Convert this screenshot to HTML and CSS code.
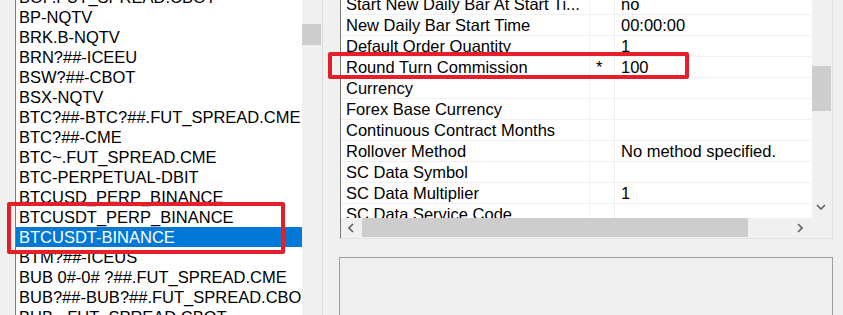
FILE: index.html
```html
<!DOCTYPE html>
<html lang="en">
  <head>
    <meta charset="UTF-8" />
    <meta name="viewport" content="width=device-width, initial-scale=1.0" />
    <title>Symbol Settings</title>
    <link rel="stylesheet" href="styles.css">
  </head>
  <body>
    <div class="app">
      <div class="symbol-box">
        <div class="symbol-list">
          <div class="symbol">BOP.FUT_SPREAD.CBOT</div>
          <div class="symbol">BP-NQTV</div>
          <div class="symbol">BRK.B-NQTV</div>
          <div class="symbol">BRN?##-ICEEU</div>
          <div class="symbol">BSW?##-CBOT</div>
          <div class="symbol">BSX-NQTV</div>
          <div class="symbol">BTC?##-BTC?##.FUT_SPREAD.CME</div>
          <div class="symbol">BTC?##-CME</div>
          <div class="symbol">BTC~.FUT_SPREAD.CME</div>
          <div class="symbol">BTC-PERPETUAL-DBIT</div>
          <div class="symbol">BTCUSD_PERP_BINANCE</div>
          <div class="symbol">BTCUSDT_PERP_BINANCE</div>
          <div class="symbol selected">BTCUSDT-BINANCE</div>
          <div class="symbol">BTM?##-ICEUS</div>
          <div class="symbol">BUB 0#-0# ?##.FUT_SPREAD.CME</div>
          <div class="symbol">BUB?##-BUB?##.FUT_SPREAD.CBOT</div>
          <div class="symbol">BUB~.FUT_SPREAD.CBOT</div>
        </div>
        <div class="vscroll">
          <div class="vthumb list-thumb"></div>
        </div>
      </div>

      <div class="right-col">
        <div class="grid-box">
          <div class="grid-main">
            <div class="grid-view">
              <div class="grid-rows">
                <div class="prop"><span class="name">Start New Daily Bar At Start Ti...</span><span class="flag"></span><span class="value">no</span></div>
                <div class="prop"><span class="name">New Daily Bar Start Time</span><span class="flag"></span><span class="value">00:00:00</span></div>
                <div class="prop"><span class="name">Default Order Quantity</span><span class="flag"></span><span class="value">1</span></div>
                <div class="prop"><span class="name">Round Turn Commission</span><span class="flag">*</span><span class="value">100</span></div>
                <div class="prop"><span class="name">Currency</span><span class="flag"></span><span class="value"></span></div>
                <div class="prop"><span class="name">Forex Base Currency</span><span class="flag"></span><span class="value"></span></div>
                <div class="prop"><span class="name">Continuous Contract Months</span><span class="flag"></span><span class="value"></span></div>
                <div class="prop"><span class="name">Rollover Method</span><span class="flag"></span><span class="value">No method specified.</span></div>
                <div class="prop"><span class="name">SC Data Symbol</span><span class="flag"></span><span class="value"></span></div>
                <div class="prop"><span class="name">SC Data Multiplier</span><span class="flag"></span><span class="value">1</span></div>
                <div class="prop"><span class="name">SC Data Service Code</span><span class="flag"></span><span class="value"></span></div>
              </div>
            </div>
            <div class="vscroll grid-vscroll">
              <div class="vthumb grid-thumb"></div>
              <svg class="arrow-down" width="10" height="6" viewBox="0 0 10 6"><path d="M1 1 L5 5 L9 1" fill="none" stroke="#606060" stroke-width="1.6"/></svg>
            </div>
          </div>
          <div class="hscroll">
            <svg class="arrow-side" width="6" height="10" viewBox="0 0 6 10"><path d="M5 1 L1 5 L5 9" fill="none" stroke="#606060" stroke-width="1.6"/></svg>
            <div class="hthumb"></div>
            <svg class="arrow-side arrow-right" width="6" height="10" viewBox="0 0 6 10"><path d="M1 1 L5 5 L1 9" fill="none" stroke="#606060" stroke-width="1.6"/></svg>
            <div class="corner"></div>
          </div>
        </div>
        <div class="desc-box"></div>
      </div>

      <div class="mark mark-symbol"></div>
      <div class="mark mark-commission"></div>
    </div>
  </body>
</html>
```

FILE: styles.css
```css
body {
  margin: 0;
  background-color: #f0f0f0;
  font-family: "Liberation Sans", Arial, sans-serif;
  font-size: 16.5px;
  color: #000;
  overflow: hidden;
}
.app {
  position: relative;
  display: flex;
  height: 315px;
  overflow: hidden;
}

/* symbol list on the left */
.symbol-box {
  display: flex;
  margin-left: 15px;
  width: 306px;
  height: 315px;
  border-left: 1px solid #7a7a7a;
  border-right: 1px solid #dadada;
  background-color: #fff;
  overflow: hidden;
}
.symbol-list {
  flex: 1;
  margin-top: -13px;
  overflow: hidden;
}
.symbol {
  height: 20px;
  line-height: 20px;
  padding-left: 3px;
  white-space: nowrap;
  overflow: hidden;
}
.symbol.selected {
  background-color: #0078d7;
  color: #fff;
}
.vscroll {
  position: relative;
  width: 20px;
  background-color: #f0f0f0;
  flex-shrink: 0;
}
.vthumb {
  position: absolute;
  left: 0;
  width: 19px;
  background-color: #cdcdcd;
}
.list-thumb {
  top: 24px;
  height: 21px;
}

/* right column */
.right-col {
  display: flex;
  flex-direction: column;
  margin-left: 16px;
  width: 494px;
}
.grid-box {
  margin-left: 1px;
  width: 491px;
  border-left: 1px solid #7a7a7a;
  border-right: 1px solid #e3e3e3;
  border-bottom: 1px solid #e3e3e3;
  display: flex;
  flex-direction: column;
}
.grid-main {
  display: flex;
  height: 218px;
}
.grid-view {
  flex: 1;
  background-color: #fff;
  overflow: hidden;
}
.grid-rows {
  margin-top: -6px;
}
.prop {
  display: flex;
  height: 20px;
  line-height: 20px;
  border-bottom: 1px solid #f0f0f0;
  white-space: nowrap;
}
.prop .name {
  width: 243px;
  padding-left: 5px;
  border-right: 1px solid #f0f0f0;
  overflow: hidden;
}
.prop .flag {
  width: 18px;
  padding-left: 6px;
  border-right: 1px solid #f0f0f0;
}
.prop .value {
  flex: 1;
  padding-left: 6px;
}
.grid-vscroll {
  width: 20px;
}
.grid-thumb {
  top: 66px;
  height: 45px;
}
.arrow-down {
  position: absolute;
  left: 4px;
  top: 204px;
}
.hscroll {
  position: relative;
  display: flex;
  align-items: center;
  height: 20px;
  background-color: #f0f0f0;
}
.arrow-side {
  margin-left: 7px;
}
.hthumb {
  margin-left: 8px;
  width: 386px;
  height: 19px;
  align-self: flex-start;
  background-color: #cdcdcd;
}
.arrow-right {
  margin-left: 49px;
}
.corner {
  margin-left: auto;
  width: 20px;
  height: 20px;
}
.desc-box {
  margin-top: 18px;
  flex: 1;
  border: 1px solid #a0a0a0;
  border-bottom: none;
  background-color: #f0f0f0;
}

/* red highlight frames drawn over the screenshot */
.mark {
  position: absolute;
  border: 4px solid #e51f2a;
  border-radius: 2px;
  box-sizing: border-box;
}
.mark-symbol {
  left: 7px;
  top: 202px;
  width: 278px;
  height: 52px;
}
.mark-commission {
  left: 328px;
  top: 52px;
  width: 361px;
  height: 27px;
}
```
